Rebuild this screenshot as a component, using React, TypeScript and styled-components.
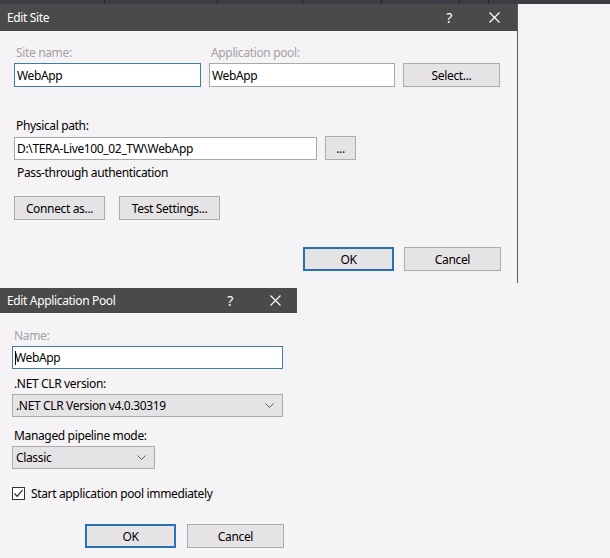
import React from 'react';
import styled, { createGlobalStyle } from 'styled-components';

const GlobalStyle = createGlobalStyle`
  html, body {
    margin: 0;
    padding: 0;
    background: #f3f3f6;
  }
  body {
    font-family: "Noto Sans", "Liberation Sans", sans-serif;
    font-size: 12px;
    letter-spacing: -0.35px;
    color: #000;
  }
`;

const Page = styled.div`
  width: 610px;
  height: 558px;
  overflow: hidden;
  display: flex;
  flex-direction: column;
`;

const TopStrip = styled.div`
  height: 5px;
  background: #3b3e43;
  display: flex;
`;

const StripCell = styled.div<{ w: number }>`
  width: ${(p) => p.w}px;
  border-right: 1px solid #222428;
  flex-shrink: 0;
`;

const Dialog = styled.div<{ w: number }>`
  width: ${(p) => p.w}px;
  display: flex;
  flex-direction: column;
  background: #f6f3f6;
`;

const SiteDialog = styled(Dialog)`
  border-right: 1px solid #5a5a5a;
  margin-bottom: 5px;
`;

const PoolDialog = styled(Dialog)`
  flex: 1;
`;

const TitleBar = styled.div<{ h: number }>`
  height: ${(p) => p.h}px;
  background: #4a4a4a;
  color: #fff;
  display: flex;
  align-items: center;
  padding: 0 6px 0 7px;
  font-size: 12px;
`;

const Title = styled.span`
  flex: 1;
`;

const TitleIcon = styled.span<{ right: number }>`
  width: 14px;
  display: flex;
  justify-content: center;
  margin-right: ${(p) => p.right}px;
  font-size: 14px;
  line-height: 1;
`;

const Body = styled.div<{ pad: string }>`
  padding: ${(p) => p.pad};
  display: flex;
  flex-direction: column;
`;

const Label = styled.div<{ muted?: boolean; top?: number }>`
  line-height: 16px;
  height: 16px;
  color: ${(p) => (p.muted ? '#a3a1a4' : '#000')};
  margin-top: ${(p) => p.top ?? 0}px;
  margin-left: 2px;
  margin-bottom: 2px;
  white-space: nowrap;
`;

const SiteGrid = styled.div`
  display: grid;
  grid-template-columns: 187px 186px 97px;
  column-gap: 8px;
  align-items: end;
`;

const Field = styled.div<{ w?: number }>`
  display: flex;
  flex-direction: column;
  ${(p) => (p.w ? `width: ${p.w}px;` : '')}
`;

const TextBox = styled.div<{ focused?: boolean; w?: number; h?: number }>`
  box-sizing: border-box;
  height: ${(p) => p.h ?? 23}px;
  ${(p) => (p.w ? `width: ${p.w}px;` : '')}
  background: #fff;
  border: 1px solid ${(p) => (p.focused ? '#3d7bab' : '#a9a7aa')};
  display: flex;
  align-items: center;
  padding-left: 2px;
  white-space: nowrap;
  overflow: hidden;
`;

const Caret = styled.span`
  display: inline-block;
  width: 1px;
  height: 14px;
  background: #000;
  margin-right: -1px;
`;

const Button = styled.div<{ primary?: boolean; w: number; h?: number }>`
  box-sizing: border-box;
  width: ${(p) => p.w}px;
  height: ${(p) => p.h ?? 24}px;
  background: #e6e3e7;
  border: ${(p) => (p.primary ? '2px solid #2872b4' : '1px solid #adabae')};
  display: flex;
  align-items: center;
  justify-content: center;
  flex-shrink: 0;
`;

const Row = styled.div<{ gap: number; top?: number; justify?: string }>`
  display: flex;
  align-items: center;
  gap: ${(p) => p.gap}px;
  margin-top: ${(p) => p.top ?? 0}px;
  justify-content: ${(p) => p.justify ?? 'flex-start'};
`;

const PlainText = styled.div<{ top: number }>`
  line-height: 16px;
  margin-top: ${(p) => p.top}px;
  margin-left: 3px;
`;

const Select = styled.div<{ w: number }>`
  box-sizing: border-box;
  width: ${(p) => p.w}px;
  height: 23px;
  background: #e6e3e7;
  border: 1px solid #adabae;
  display: flex;
  align-items: center;
  padding: 0 8px 0 3px;
`;

const SelectText = styled.span`
  flex: 1;
`;

const CheckRow = styled.div`
  display: flex;
  align-items: center;
  gap: 6px;
  margin-top: 16px;
  height: 16px;
`;

const CheckBox = styled.div`
  box-sizing: border-box;
  width: 13px;
  height: 13px;
  border: 1px solid #333;
  background: #fff;
  display: flex;
  align-items: center;
  justify-content: center;
`;

const Chevron = () => (
  <svg width="9" height="5" viewBox="0 0 9 5">
    <path d="M0.5 0.5 L4.5 4.5 L8.5 0.5" fill="none" stroke="#5a5a5a" strokeWidth="1" />
  </svg>
);

const CloseIcon = () => (
  <svg width="11" height="11" viewBox="0 0 11 11">
    <path d="M0.5 0.5 L10.5 10.5 M10.5 0.5 L0.5 10.5" stroke="#fff" strokeWidth="1.2" />
  </svg>
);

const Check = () => (
  <svg width="11" height="11" viewBox="0 0 11 11">
    <path d="M1.5 5.5 L4.2 8.3 L9.5 2.2" fill="none" stroke="#222" strokeWidth="1.2" />
  </svg>
);

const App: React.FC = () => (
  <Page>
    <GlobalStyle />
    <TopStrip>
      {[104, 112, 84, 78, 77, 28].map((w, i) => (
        <StripCell key={i} w={w} />
      ))}
    </TopStrip>

    <SiteDialog w={517}>
      <TitleBar h={27}>
        <Title>Edit Site</Title>
        <TitleIcon right={31}>?</TitleIcon>
        <TitleIcon right={10}>
          <CloseIcon />
        </TitleIcon>
      </TitleBar>
      <Body pad="14px 16px 12px 14px">
        <SiteGrid>
          <Field>
            <Label muted>Site name:</Label>
            <TextBox focused h={24}>WebApp</TextBox>
          </Field>
          <Field>
            <Label muted>Application pool:</Label>
            <TextBox h={24}>WebApp</TextBox>
          </Field>
          <Button w={97}>Select...</Button>
        </SiteGrid>

        <Label top={31}>Physical path:</Label>
        <Row gap={8}>
          <TextBox w={303}>D:\TERA-Live100_02_TW\WebApp</TextBox>
          <Button w={31} h={24}>...</Button>
        </Row>
        <PlainText top={5}>Pass-through authentication</PlainText>
        <Row gap={14} top={15}>
          <Button w={91}>Connect as...</Button>
          <Button w={101}>Test Settings...</Button>
        </Row>
        <Row gap={10} top={27} justify="flex-end">
          <Button primary w={91}>OK</Button>
          <Button w={97}>Cancel</Button>
        </Row>
      </Body>
    </SiteDialog>

    <PoolDialog w={297}>
      <TitleBar h={25}>
        <Title>Edit Application Pool</Title>
        <TitleIcon right={31}>?</TitleIcon>
        <TitleIcon right={9}>
          <CloseIcon />
        </TitleIcon>
      </TitleBar>
      <Body pad="15px 13px 10px 12px">
        <Field w={271}>
          <Label muted>Name:</Label>
          <TextBox focused>
            <Caret />
            WebApp
          </TextBox>
        </Field>
        <Label top={7}>.NET CLR version:</Label>
        <Select w={271}>
          <SelectText>.NET CLR Version v4.0.30319</SelectText>
          <Chevron />
        </Select>
        <Label top={11}>Managed pipeline mode:</Label>
        <Select w={143}>
          <SelectText>Classic</SelectText>
          <Chevron />
        </Select>
        <CheckRow>
          <CheckBox>
            <Check />
          </CheckBox>
          <span>Start application pool immediately</span>
        </CheckRow>
        <Row gap={11} top={23} justify="flex-end">
          <Button primary w={91}>OK</Button>
          <Button w={97}>Cancel</Button>
        </Row>
      </Body>
    </PoolDialog>
  </Page>
);

export default App;
